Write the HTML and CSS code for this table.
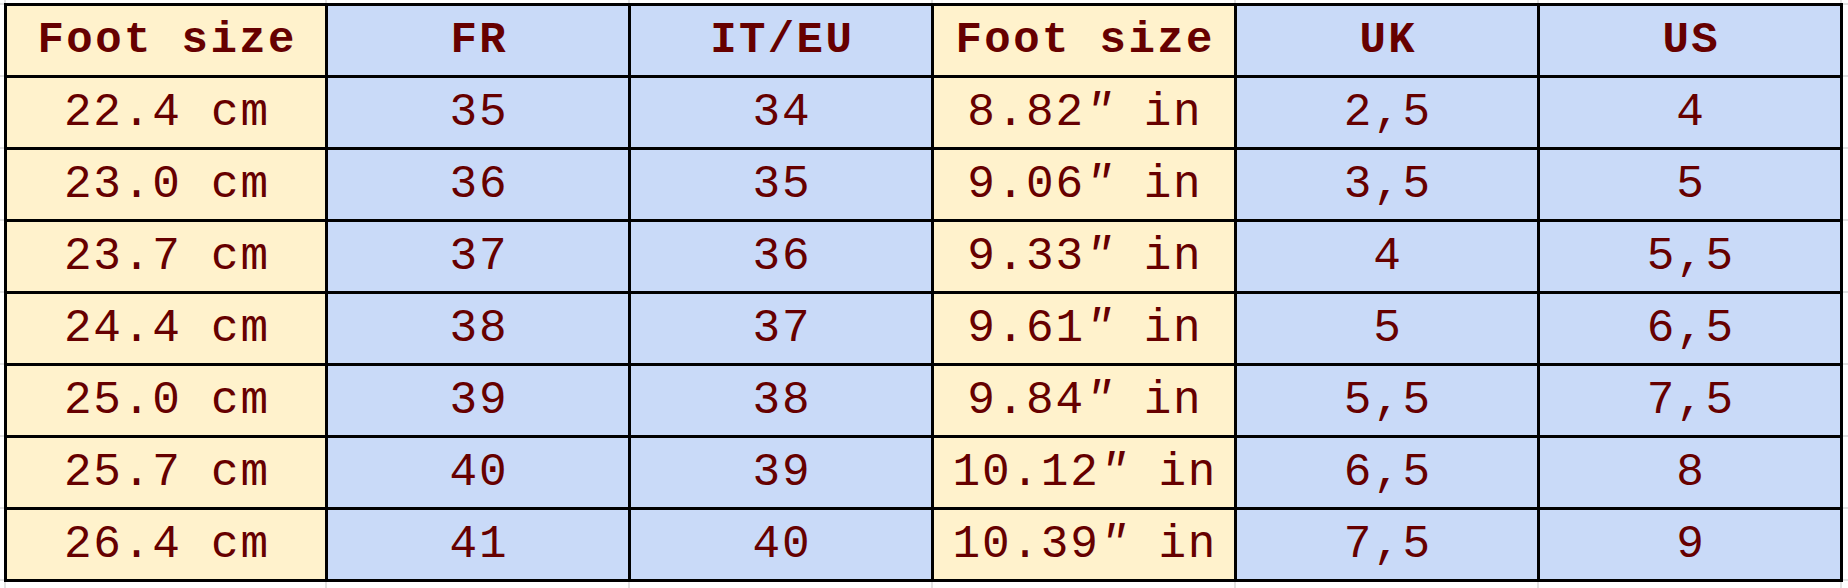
FILE: index.html
```html
<!DOCTYPE html>
<html lang="en">
<head>
<meta charset="utf-8">
<title>Shoe size chart</title>
<link rel="stylesheet" href="styles.css">
</head>
<body>
<div class="sheet">
  <table class="sizes">
    <thead>
      <tr>
        <th class="cream">Foot size</th>
        <th class="blue">FR</th>
        <th class="blue">IT/EU</th>
        <th class="cream">Foot size</th>
        <th class="blue">UK</th>
        <th class="blue">US</th>
      </tr>
    </thead>
    <tbody>
      <tr><td class="cream">22.4 cm</td><td class="blue">35</td><td class="blue">34</td><td class="cream">8.82<span class="prime">″</span> in</td><td class="blue">2,5</td><td class="blue">4</td></tr>
      <tr><td class="cream">23.0 cm</td><td class="blue">36</td><td class="blue">35</td><td class="cream">9.06<span class="prime">″</span> in</td><td class="blue">3,5</td><td class="blue">5</td></tr>
      <tr><td class="cream">23.7 cm</td><td class="blue">37</td><td class="blue">36</td><td class="cream">9.33<span class="prime">″</span> in</td><td class="blue">4</td><td class="blue">5,5</td></tr>
      <tr><td class="cream">24.4 cm</td><td class="blue">38</td><td class="blue">37</td><td class="cream">9.61<span class="prime">″</span> in</td><td class="blue">5</td><td class="blue">6,5</td></tr>
      <tr><td class="cream">25.0 cm</td><td class="blue">39</td><td class="blue">38</td><td class="cream">9.84<span class="prime">″</span> in</td><td class="blue">5,5</td><td class="blue">7,5</td></tr>
      <tr><td class="cream">25.7 cm</td><td class="blue">40</td><td class="blue">39</td><td class="cream">10.12<span class="prime">″</span> in</td><td class="blue">6,5</td><td class="blue">8</td></tr>
      <tr><td class="cream">26.4 cm</td><td class="blue">41</td><td class="blue">40</td><td class="cream">10.39<span class="prime">″</span> in</td><td class="blue">7,5</td><td class="blue">9</td></tr>
    </tbody>
  </table>
</div>
</body>
</html>
```

FILE: styles.css
```css
html, body {
  margin: 0;
  padding: 0;
  background: #ffffff;
}

.sheet {
  width: 1848px;
  height: 588px;
  box-sizing: border-box;
  padding: 3px 0 0 4px;
  background-color: #ffffff;
  background-image:
    linear-gradient(to right, #e2e2e2 0 2px, transparent 2px),
    repeating-linear-gradient(to right, #e2e2e2 0 2px, transparent 2px 303px),
    repeating-linear-gradient(to bottom, #e2e2e2 0 2px, transparent 2px 72px);
  background-size: 2px 100%, 100% 100%, 100% 100%;
  background-position: 4px 0, 325px 0, 0 3px;
  background-repeat: no-repeat, no-repeat, no-repeat;
  overflow: hidden;
}

.sizes {
  border-collapse: separate;
  border-spacing: 0;
  border-top: 3px solid #000;
  border-left: 3px solid #000;
  table-layout: fixed;
  font-family: "Liberation Mono", "DejaVu Sans Mono", monospace;
  color: #660000;
}

.sizes th,
.sizes td {
  box-sizing: content-box;
  width: 300px;
  height: 69px;
  padding: 0;
  border-right: 3px solid #000;
  border-bottom: 3px solid #000;
  text-align: center;
  vertical-align: middle;
  white-space: nowrap;
  line-height: 69px;
  overflow: hidden;
}

.sizes th:first-child,
.sizes td:first-child {
  width: 318px;
}

.sizes th {
  font-weight: 700;
  font-size: 44px;
  letter-spacing: 2.4px;
  text-indent: 2.4px;
}

.sizes td {
  font-weight: 400;
  font-size: 46px;
  letter-spacing: 1.8px;
  text-indent: 1.8px;
  padding-top: 2px;
  height: 67px;
  line-height: 67px;
}

.prime {
  font-style: italic;
}

.cream {
  background: #fff2cc;
}

.blue {
  background: #c9daf8;
}
```
